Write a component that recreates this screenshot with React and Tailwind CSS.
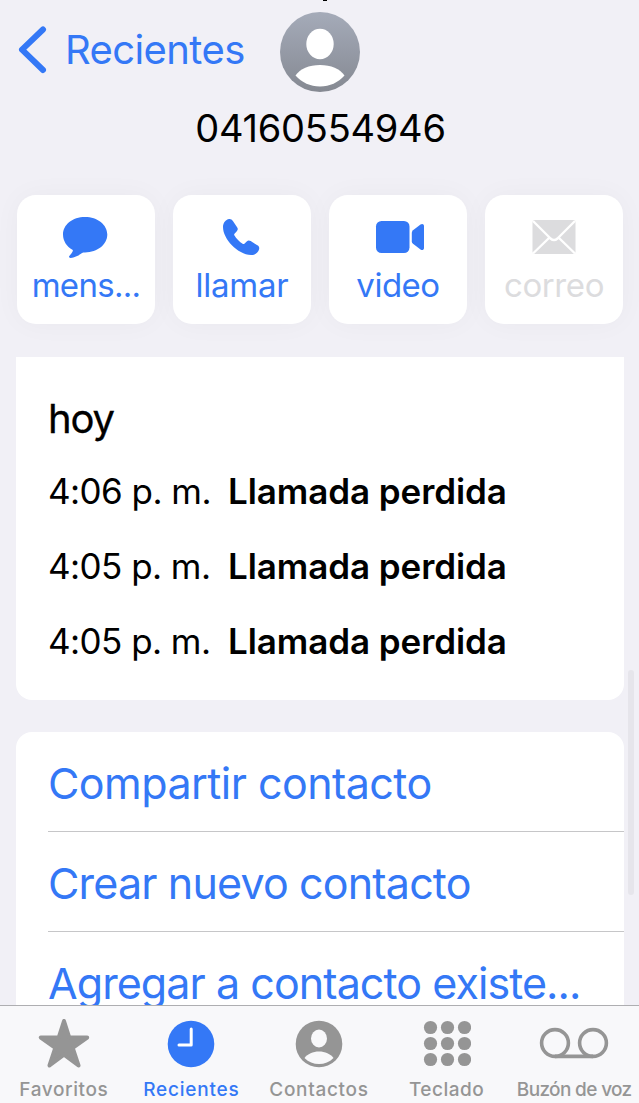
const calls = [
  { time: "4:06 p. m.", label: "Llamada perdida" },
  { time: "4:05 p. m.", label: "Llamada perdida" },
  { time: "4:05 p. m.", label: "Llamada perdida" },
];

const MessageIcon = () => (
  <svg width="46" height="44" viewBox="0 0 46 44" fill="currentColor">
    <path d="M23 2C10.500 2 1 9.600 1 19.600c0 6.600 3.800 12 9.400 15.200.5.300.6.900.3 1.400-.8 1.700-2.100 3.300-3.200 4.500-1 1.200-.4 2.300 1.300 2.200 4-.3 8.200-2.600 11.300-4.900.7-.5 1.500-.6 2.900-.6 12.500 0 22.300-7.800 22.300-17.800S35.500 2 23 2z" />
  </svg>
);

const PhoneIcon = () => (
  <svg width="38" height="38" viewBox="0 0 38 38" fill="currentColor">
    <path d="M1 9C1 5 3.500 1.500 7.200 1c1.700-.1 2.800.6 3.700 2l4.200 6.200c1 1.500.9 2.700-.3 4l-2.300 2.500c-.4.500-.5.900-.2 1.500 2 3.500 5.100 6.600 8.700 8.700.5.300.9.300 1.400-.2l2.300-2.200c1.300-1.200 2.500-1.300 4-.4l6.700 4.200c1.600 1 2.100 2.300 1.700 4-.8 3.600-4.300 5.900-8 5.700C15.500 36.500 1 21 1 9z" />
  </svg>
);

const VideoIcon = () => (
  <svg width="50" height="34" viewBox="0 0 50 34" fill="currentColor">
    <rect x="1" y="1" width="33.500" height="32" rx="5.500" />
    <path d="M36.800 12.800c0-1.100.4-1.900 1.200-2.600l7.500-5.700c1.600-1.200 3.500-.6 3.500 1.400v22.200c0 2-1.900 2.600-3.500 1.400L38 23.800c-.8-.7-1.200-1.500-1.200-2.600z" />
  </svg>
);

const MailIcon = () => (
  <svg width="44" height="36" viewBox="0 0 44 36" fill="none">
    <rect x="0.500" y="1" width="43" height="34" rx="2" fill="currentColor" />
    <path
      d="M1 2l17.500 17.500c2.500 2.300 4.500 2.300 7 0L43 2M1 34.500l16-15.500M43 34.500L27 19"
      stroke="white"
      strokeWidth="2.400"
    />
  </svg>
);

const actions = [
  { label: "mens...", icon: <MessageIcon />, shift: "mr-0.5", tracking: "tracking-[-0.7px]" },
  { label: "llamar", icon: <PhoneIcon />, shift: "mr-0.5", tracking: "tracking-[-0.2px]" },
  { label: "video", icon: <VideoIcon />, shift: "ml-1", tracking: "tracking-[-0.5px]" },
  { label: "correo", icon: <MailIcon />, shift: "ml-0", tracking: "tracking-[-0.4px]", disabled: true },
];

const options = [
  { label: "Compartir contacto", tracking: "tracking-[-0.55px]" },
  { label: "Crear nuevo contacto", tracking: "tracking-[-0.83px]" },
  { label: "Agregar a contacto existe...", tracking: "tracking-[-0.93px]" },
];

const StarIcon = () => (
  <svg width="52" height="50" viewBox="0 0 52 50" fill="currentColor" stroke="currentColor" strokeWidth="4" strokeLinejoin="round">
    <path d="M26 2l5.300 16.500h17.900L34.700 28.900 40.500 46.500 26 35.700 11.500 46.500l5.800-17.600L2.800 18.500h17.900z" />
  </svg>
);

const ClockIcon = () => (
  <svg width="48" height="48" viewBox="0 0 48 48" fill="none">
    <circle cx="24" cy="24" r="23.300" fill="currentColor" />
    <path d="M24.200 9v16H12" stroke="white" strokeWidth="3" strokeLinecap="round" strokeLinejoin="round" />
  </svg>
);

const PersonIcon = () => (
  <svg width="48" height="48" viewBox="0 0 48 48" fill="none">
    <circle cx="24" cy="24" r="23.300" fill="currentColor" />
    <ellipse cx="24" cy="18.500" rx="8" ry="9" fill="#f8f8fa" />
    <path d="M9.500 38c3-4 8.500-6.500 14.500-6.500S35.500 34 38.500 38C34.500 42 29.500 44 24 44S13.500 42 9.500 38z" fill="#f8f8fa" />
  </svg>
);

const KeypadIcon = () => (
  <svg width="48" height="48" viewBox="0 0 48 48" fill="currentColor">
    {[7.5, 24.5, 41.5].map((x) =>
      [7.5, 23.5, 39.5].map((y) => <circle key={`${x}-${y}`} cx={x} cy={y} r="6.600" />)
    )}
  </svg>
);

const VoicemailIcon = () => (
  <svg width="70" height="48" viewBox="0 0 70 48" fill="none" stroke="currentColor" strokeWidth="3.600">
    <circle cx="16" cy="23" r="13.400" />
    <circle cx="54" cy="23" r="13.400" />
    <path d="M16 36.400h38" />
  </svg>
);

const tabs = [
  { label: "Favoritos", icon: <StarIcon />, tracking: "tracking-[0.6px]" },
  { label: "Recientes", icon: <ClockIcon />, tracking: "tracking-[0.8px]", active: true },
  { label: "Contactos", icon: <PersonIcon />, tracking: "tracking-[0.7px]" },
  { label: "Teclado", icon: <KeypadIcon />, tracking: "tracking-[0.5px]" },
  { label: "Buzón de voz", icon: <VoicemailIcon />, tracking: "tracking-[-0.65px]" },
];

const Header = () => (
  <header className="relative h-[195px] shrink-0 flex flex-col items-center pt-3">
    <span className="absolute top-0 left-[323px] w-1 h-px bg-black" />
    <button type="button" className="absolute left-[18px] top-[25px] flex items-center text-[#3478f6] cursor-pointer">
      <svg width="30" height="50" viewBox="0 0 30 50" fill="none" stroke="currentColor" strokeWidth="6" strokeLinecap="round" strokeLinejoin="round">
        <path d="M25 4.500L4 24.700 25 45" />
      </svg>
      <span className="ml-[17px] text-[40px] leading-[50px] tracking-[-0.6px]">Recientes</span>
    </button>
    <svg width="80" height="80" viewBox="0 0 80 80">
      <defs>
        <linearGradient id="avatar" x1="0" y1="0" x2="0" y2="1">
          <stop offset="0" stopColor="#a5abb9" />
          <stop offset="1" stopColor="#858992" />
        </linearGradient>
      </defs>
      <circle cx="40" cy="40" r="40" fill="url(#avatar)" />
      <ellipse cx="40" cy="32" rx="13.700" ry="15.200" fill="white" />
      <path d="M15.500 63.500C20 57 29 53 40 53s20 4 24.500 10.500C58 70.500 50 74.500 40 74.500S22 70.500 15.500 63.500z" fill="white" />
    </svg>
    <h1 className="mt-3 ml-0.5 text-[38px] leading-12 tracking-[-0.25px]">04160554946</h1>
  </header>
);

const App = () => {
  return (
    <div className="relative w-full h-[1103px] flex flex-col overflow-hidden bg-[#f1f0f6] font-['Inter','Liberation_Sans',sans-serif] text-black">
      <Header />

      <div className="shrink-0 grid grid-cols-4 gap-[18px] pl-[17px] pr-4">
        {actions.map(({ label, icon, shift, tracking, disabled }) => (
          <button
            key={label}
            type="button"
            disabled={disabled}
            className={`h-[129px] flex flex-col items-center rounded-[19px] bg-white pt-[19px] shadow-[0_0_28px_rgba(0,0,0,0.035)] ${disabled ? "text-[#dcdcde]" : "text-[#3478f6]"}`}
          >
            <span className={`h-[46px] flex items-center ${shift}`}>{icon}</span>
            <span className={`text-[33px] leading-[50px] whitespace-nowrap ${tracking}`}>{label}</span>
          </button>
        ))}
      </div>

      {/* Call history */}
      <section className="shrink-0 h-[343px] mt-[33px] ml-4 mr-[15px] rounded-b-2xl bg-white px-8 pt-[37px]">
        <h2 className="text-[40px] leading-[50px] tracking-[-1.2px] [-webkit-text-stroke:0.3px_black]">hoy</h2>
        <ul className="mt-2.5">
          {calls.map(({ time, label }, i) => (
            <li key={i} className="h-[75px] flex items-center leading-[75px] text-[35px] whitespace-nowrap">
              <span className="w-[180px] tracking-[-0.55px]">{time}</span>
              <span className="font-semibold tracking-[-0.08px]">{label}</span>
            </li>
          ))}
        </ul>
      </section>

      {/* Contact options, continues under the tab bar */}
      <section className="flex-1 min-h-0 mt-8 ml-4 mr-[15px] rounded-t-2xl bg-white pl-8 overflow-hidden">
        {options.map(({ label, tracking }) => (
          <button
            key={label}
            type="button"
            className={`block w-full h-[100px] border-b border-[#c6c6c8] text-left text-[43px] leading-[103px] text-[#3478f6] whitespace-nowrap ${tracking}`}
          >
            {label}
          </button>
        ))}
      </section>

      <span className="absolute right-[5px] top-[670px] w-1.5 h-[225px] rounded-full bg-[#e6e5eb]" />

      <nav className="shrink-0 h-[98px] grid grid-cols-5 border-t border-[#aeaeb1] bg-[#f8f8fa] pr-px">
        {tabs.map(({ label, icon, tracking, active }) => (
          <button
            key={label}
            type="button"
            className={`flex flex-col items-center pt-3.5 ${active ? "text-[#3478f6]" : "text-[#959595]"}`}
          >
            <span className="h-12 flex items-center justify-center">{icon}</span>
            <span className={`mt-2.5 text-[19px] leading-6 font-medium whitespace-nowrap ${tracking}`}>{label}</span>
          </button>
        ))}
      </nav>
    </div>
  );
};

export default App;
